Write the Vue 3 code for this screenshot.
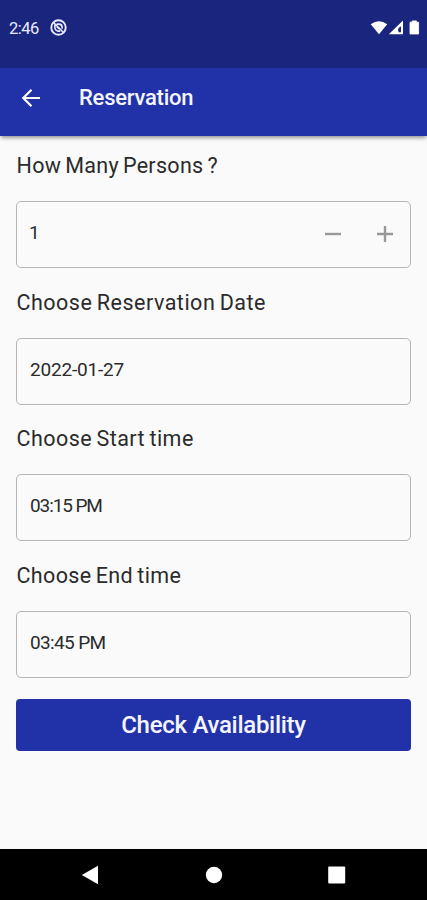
<template>
  <div class="screen">
    <div class="status-bar">
      <span class="clock">2:46</span>
      <svg class="notice" viewBox="0 0 16 16">
        <circle cx="8" cy="8" r="6.8" fill="none" stroke="#e8eaff" stroke-width="1.8" />
        <path d="M4.6 5.4v2.8a3.4 3.4 0 0 0 5 2.8M6.2 4.8h2.3a3 3 0 0 1 2.9 3v1.4M3.5 3.5l9 9M6.4 7.2l2.3 2.2" fill="none" stroke="#e8eaff" stroke-width="1.5" />
      </svg>
      <svg class="signals" viewBox="0 0 50 16">
        <path d="M0.7 4.3Q9-1.8 17.2 4.3L9 14.3z" fill="#fff" />
        <path d="M18.8 14.3L33 0.5V14.3zM31 6.2q-4.5 2.6-2.2 6H31z" fill="#fff" fill-rule="evenodd" />
        <path d="M40 2.2h2.2V0.9h4.2v1.3h2.2V14H40z" fill="#fff" stroke="#fff" stroke-width="0.8" stroke-linejoin="round" />
      </svg>
    </div>

    <header class="app-bar">
      <button class="back" aria-label="Back">
        <svg viewBox="0 0 20 20">
          <path d="M19 10H2.5M10.5 1.8L2.3 10l8.2 8.2" fill="none" stroke="#fff" stroke-width="2.2" />
        </svg>
      </button>
      <h1>Reservation</h1>
    </header>

    <main>
      <div class="group">
        <label class="persons">How Many Persons ?</label>
        <div class="field">
          <span class="value persons-value">{{ persons }}</span>
          <button class="step" aria-label="Less" @click="removePerson">
            <svg viewBox="0 0 16 16"><path d="M0 8h16" /></svg>
          </button>
          <button class="step" aria-label="More" @click="persons++">
            <svg viewBox="0 0 16 16"><path d="M0 8h16M8 0v16" /></svg>
          </button>
        </div>
      </div>
      <div v-for="item in items" :key="item.name" class="group">
        <label :class="item.name">{{ item.label }}</label>
        <div class="field">
          <span class="value" :class="item.name + '-value'">{{ item.value }}</span>
        </div>
      </div>
      <button class="check"><span>Check Availability</span></button>
    </main>

    <nav>
      <svg viewBox="0 0 20 20"><path d="M0.8 10L17 0.8v18.4z" /></svg>
      <svg viewBox="0 0 20 20"><circle cx="10" cy="10" r="8.2" /></svg>
      <svg viewBox="0 0 20 20"><rect x="1.2" y="1.5" width="17" height="17" rx="1" /></svg>
    </nav>
  </div>
</template>

<script setup>
import { ref } from 'vue';

const persons = ref(1);

const items = [
  { name: 'date', label: 'Choose Reservation Date', value: '2022-01-27' },
  { name: 'start', label: 'Choose Start time', value: '03:15 PM' },
  { name: 'end', label: 'Choose End time', value: '03:45 PM' }
];

function removePerson() {
  if (persons.value > 1) persons.value--;
}
</script>

<style>
body {
  margin: 0;
  background: #fafafa;
}
</style>

<style scoped>
.screen {
  display: flex;
  flex-direction: column;
  width: 427px;
  height: 900px;
  overflow: hidden;
  background: #fafafa;
  color: #2b2b2b;
  font-family: Roboto, sans-serif;
}

button {
  padding: 0;
  border: none;
  background: none;
  font-family: inherit;
  cursor: pointer;
}

svg {
  display: block;
}

.status-bar {
  display: flex;
  align-items: center;
  box-sizing: border-box;
  height: 68px;
  padding: 0 7px 13px 9px;
  background: #1a267d;
}

.clock {
  width: 41px;
  padding-top: 1px;
  color: #e8eaff;
  font-size: 16.5px;
  letter-spacing: -0.5px;
}

.notice {
  width: 17px;
  height: 17px;
}

.signals {
  width: 50px;
  height: 16px;
  margin-left: auto;
}

.app-bar {
  display: flex;
  align-items: center;
  box-sizing: border-box;
  height: 68px;
  padding: 0 0 8px 21px;
  background: #2132a9;
  box-shadow: 0 3px 4px -1px rgba(0, 0, 0, 0.4);
}

.back {
  width: 58px;
}

.back svg {
  width: 20px;
  height: 20px;
}

h1 {
  margin: 0;
  color: #f4f5ff;
  font-size: 22px;
  line-height: 26px;
  font-weight: 500;
  letter-spacing: -0.25px;
}

main {
  flex: 1;
  padding: 17px 16px 0;
}

.group {
  height: 136.7px;
}

label {
  display: block;
  height: 48px;
  padding-left: 0.5px;
  font-size: 21.5px;
  line-height: 26px;
  white-space: nowrap;
}

.persons {
  letter-spacing: 0.3px;
  word-spacing: -1.6px;
}

.date {
  letter-spacing: 0.5px;
  word-spacing: -1.4px;
}

.start {
  letter-spacing: 0.45px;
  word-spacing: -1.4px;
}

.end {
  letter-spacing: 0.35px;
  word-spacing: -1.4px;
}

.field {
  display: flex;
  align-items: center;
  box-sizing: border-box;
  height: 67px;
  padding: 0 17px 0 13px;
  border: 1.5px solid #b5b5b5;
  border-radius: 5px;
}

.value {
  flex: 1;
  padding-bottom: 3px;
  font-size: 19px;
  line-height: 24px;
}

.persons-value {
  margin-left: -1px;
}

.date-value {
  letter-spacing: -0.2px;
}

.start-value {
  letter-spacing: -1.1px;
}

.end-value {
  letter-spacing: -0.65px;
}

.step {
  margin: 0 0 2px 36px;
}

.step svg {
  width: 16px;
  height: 16px;
  stroke: #989898;
  stroke-width: 2.4;
}

.check {
  display: block;
  width: 395px;
  height: 52px;
  margin-top: -0.3px;
  border-radius: 4px;
  background: #2132a9;
  color: #f4f5ff;
  font-size: 24px;
  font-weight: 500;
  letter-spacing: -0.28px;
}

nav {
  display: flex;
  align-items: center;
  justify-content: center;
  gap: 103px;
  height: 51px;
  background: #000;
}

nav svg {
  width: 20px;
  height: 20px;
  fill: #fff;
}
</style>
